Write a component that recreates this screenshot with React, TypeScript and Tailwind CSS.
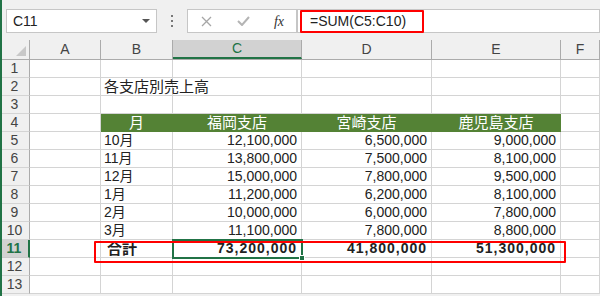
import React from "react";

const cols = ["A", "B", "C", "D", "E", "F"];
const widths = [71, 72, 129, 130, 129, 39];

type Cell = { t?: string; align?: "l" | "r" | "c"; bold?: boolean; cjk?: boolean };

const data: Record<number, Cell[]> = {
  2: [{}, { t: "各支店別売上高", cjk: true }, {}, {}, {}, {}],
  4: [
    {},
    { t: "月", align: "c", cjk: true },
    { t: "福岡支店", align: "c", cjk: true },
    { t: "宮崎支店", align: "c", cjk: true },
    { t: "鹿児島支店", align: "c", cjk: true },
    {},
  ],
};
const months = ["10月", "11月", "12月", "1月", "2月", "3月"];
const c = ["12,100,000", "13,800,000", "15,000,000", "11,200,000", "10,000,000", "11,100,000"];
const d = ["6,500,000", "7,500,000", "7,800,000", "6,200,000", "6,000,000", "7,800,000"];
const e = ["9,000,000", "8,100,000", "9,500,000", "8,100,000", "7,800,000", "8,800,000"];
months.forEach((m, i) => {
  data[5 + i] = [{}, { t: m }, { t: c[i], align: "r" }, { t: d[i], align: "r" }, { t: e[i], align: "r" }, {}];
});
data[11] = [
  {},
  { t: "合計", bold: true, cjk: true },
  { t: "73,200,000", align: "r", bold: true },
  { t: "41,800,000", align: "r", bold: true },
  { t: "51,300,000", align: "r", bold: true },
  {},
];

const font = { fontFamily: '"Liberation Sans", "Noto Sans CJK JP", sans-serif' };

export default function App() {
  const rows = Array.from({ length: 13 }, (_, i) => i + 1);
  return (
    <div className="relative w-[600px] h-[296px] overflow-hidden bg-[#f0f0f0] text-[#222]" style={font}>
      {/* left green edge */}
      <div className="absolute left-0 top-0 w-[2px] h-full bg-[#217346] z-20" />
      {/* formula bar */}
      <div className="h-[40px] flex items-start pt-[9px] pl-[6px]">
        <div className="w-[151px] h-[24px] bg-white border border-[#c6c6c6] flex items-center justify-between pl-[6px] pr-[6px]">
          <span className="text-[14px]">C11</span>
          <svg width="8" height="5" viewBox="0 0 8 5"><path d="M0 0h8L4 4z" fill="#555" /></svg>
        </div>
        <div className="w-[30px] h-[24px] flex flex-col items-center justify-center gap-[3px]">
          <div className="w-[2px] h-[2px] bg-[#777]" />
          <div className="w-[2px] h-[2px] bg-[#777]" />
          <div className="w-[2px] h-[2px] bg-[#777]" />
        </div>
        <div className="w-[110px] h-[24px] bg-white border border-[#c6c6c6] flex items-center">
          <div className="w-[36px] flex justify-center">
            <svg width="11" height="11" viewBox="0 0 11 11"><path d="M1 1l9 9M10 1l-9 9" stroke="#a6a6a6" strokeWidth="1.3" /></svg>
          </div>
          <div className="w-[38px] flex justify-center">
            <svg width="13" height="10" viewBox="0 0 13 10"><path d="M1 5l4 4 7-8" stroke="#b4b4b4" strokeWidth="2" fill="none" /></svg>
          </div>
          <div className="w-[34px] flex justify-center">
            <span className="italic text-[14px] text-[#333]" style={{ fontFamily: '"Liberation Serif", serif' }}>fx</span>
          </div>
        </div>
        <div className="flex-1 h-[24px] bg-white border border-[#c6c6c6] flex items-center pl-[12px]">
          <span className="text-[14px]">=SUM(C5:C10)</span>
        </div>
      </div>
      {/* red box around formula */}
      <div className="absolute left-[300px] top-[10px] w-[124px] h-[23px] border-2 border-[#ff0000] rounded-[1px]" />

      {/* sheet */}
      <div className="bg-white">
        {/* column headers */}
        <div className="flex h-[20px] bg-[#f0f0f0] border-b border-[#ababab]">
          <div className="w-[30px] h-full relative border-r border-[#ababab]">
            <svg className="absolute left-[16px] top-[6px]" width="10" height="10" viewBox="0 0 10 10"><path d="M10 0V10H0z" fill="#c8c8c8" /></svg>
          </div>
          {cols.map((col, i) => (
            <div
              key={col}
              className={
                "h-full flex items-center justify-center text-[14px] box-border " +
                (col === "C"
                  ? "bg-[#d2d2d2] text-[#217346] border-b-2 border-[#217346] border-r border-r-[#ababab]"
                  : "text-[#444] border-r border-[#ababab]")
              }
              style={{ width: widths[i] }}
            >
              {col}
            </div>
          ))}
        </div>
        {rows.map((r) => (
          <div key={r} className="flex h-[18px]">
            <div
              className={
                "w-[30px] h-full flex items-center justify-center text-[14px] box-border border-b " +
                (r === 11
                  ? "bg-[#d2d2d2] text-[#217346] font-bold border-r-2 border-r-[#217346] border-b-[#c8c8c8]"
                  : "bg-[#f0f0f0] text-[#444] border-r border-r-[#ababab] border-b-[#d4d4d4]")
              }
            >
              {r}
            </div>
            {cols.map((col, i) => {
              const cell = data[r]?.[i] ?? {};
              const green = r === 4 && i >= 1 && i <= 4;
              return (
                <div
                  key={col}
                  className={
                    "h-full box-border flex items-end whitespace-nowrap leading-[17px] border-b border-r " +
                    (green ? "bg-[#548235] text-white border-[#548235] " : "border-[#d4d4d4] ") +
                    (cell.align === "r" ? "justify-end pr-[4px] " : cell.align === "c" ? "justify-center " : "justify-start pl-[3px] ") +
                    (cell.bold ? (cell.cjk ? "font-bold pl-[6px] " : "font-bold tracking-[1px] ") : "") +
                    (cell.cjk ? "text-[15px]" : "text-[14px]")
                  }
                  style={{ width: widths[i] }}
                >
                  {cell.t}
                </div>
              );
            })}
          </div>
        ))}
      </div>

      {/* selection C11 */}
      <div className="absolute left-[172px] top-[239px] w-[131px] h-[20px] border-2 border-[#217346]" />
      <div className="absolute left-[299px] top-[255px] w-[6px] h-[6px] bg-[#217346] border border-white" />
      {/* red box row 11 */}
      <div className="absolute left-[94px] top-[241px] w-[472px] h-[22px] border-2 border-[#ff0000] rounded-[1px]" />
    </div>
  );
}
